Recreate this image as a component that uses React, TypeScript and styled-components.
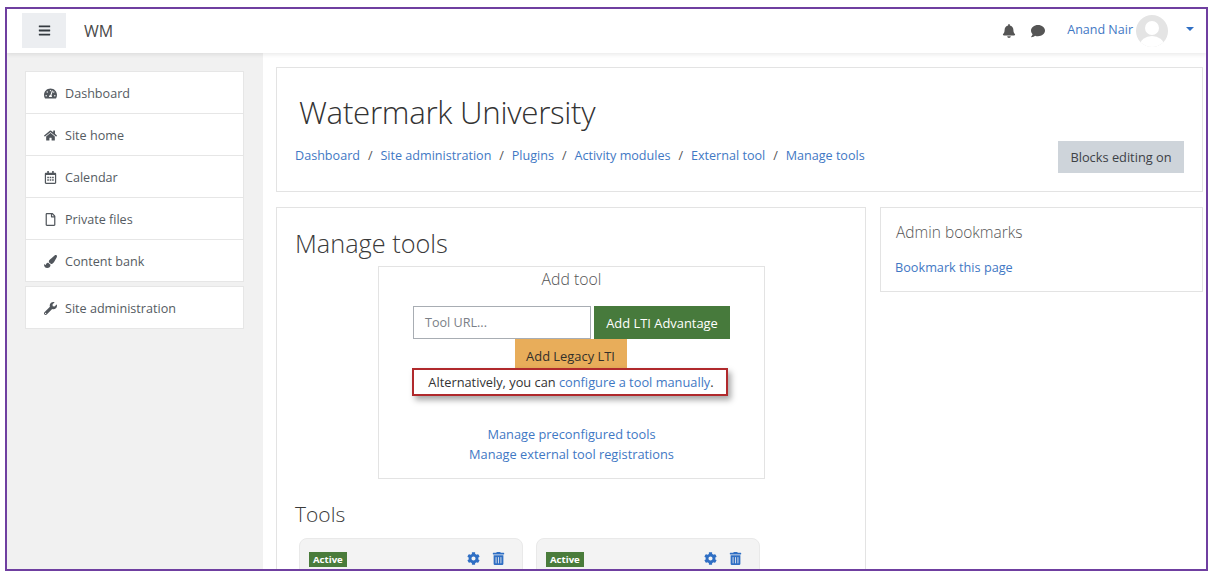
import React from 'react';
import styled, { createGlobalStyle } from 'styled-components';
import {
  FaBars,
  FaBell,
  FaCog,
  FaComment,
  FaHome,
  FaPaintBrush,
  FaRegCalendarAlt,
  FaRegFile,
  FaTachometerAlt,
  FaTrashAlt,
  FaWrench,
} from 'react-icons/fa';

const GlobalStyle = createGlobalStyle`
  html, body {
    margin: 0;
    padding: 0;
    background: #fff;
    font-family: "Open Sans", "Liberation Sans", sans-serif;
    overflow: hidden;
  }
`;

const Frame = styled.div`
  box-sizing: border-box;
  width: 1203px;
  height: 564px;
  margin: 7px 0 0 5px;
  border: 2px solid #6f3fa0;
  display: flex;
  flex-direction: column;
  overflow: hidden;
  background: #fff;
`;

const Navbar = styled.header`
  flex: none;
  box-sizing: border-box;
  height: 44px;
  display: flex;
  align-items: center;
  padding: 0 12px 1px 15px;
  background: #fff;
  box-shadow: 0 2px 4px rgba(0, 0, 0, 0.08);
  position: relative;
`;

const MenuButton = styled.div`
  width: 44px;
  height: 35px;
  display: flex;
  align-items: center;
  justify-content: center;
  background: #eceef1;
  color: #343a40;
  font-size: 13px;
`;

const Brand = styled.span`
  margin-left: 18px;
  font-size: 16px;
  color: #4a4a4a;
`;

const NavRight = styled.div`
  margin-left: auto;
  display: flex;
  align-items: center;
  color: #555;
`;

const NavIcon = styled.span<{ $gap: number }>`
  display: flex;
  font-size: 14px;
  margin-right: ${(p) => p.$gap}px;
`;

const UserName = styled.a`
  font-size: 12.5px;
  color: #3f78c4;
  margin: 0 3px 3px 0;
`;

const Caret = styled.span`
  width: 0;
  height: 0;
  margin: 0 0 4px 18px;
  border-left: 4px solid transparent;
  border-right: 4px solid transparent;
  border-top: 4px solid #2f6fc4;
`;

const Body = styled.div`
  flex: 1;
  display: flex;
  min-height: 0;
`;

const Sidebar = styled.aside`
  flex: none;
  width: 256px;
  box-sizing: border-box;
  padding: 18px 19px 0 18px;
  background: #f1f1f1;
  display: flex;
  flex-direction: column;
  gap: 4px;
`;

const NavCard = styled.nav`
  background: #fff;
  border: 1px solid #e6e6e6;
`;

const NavItem = styled.div`
  box-sizing: border-box;
  height: 41px;
  display: flex;
  align-items: center;
  padding: 2px 0 0 17px;
  font-size: 12.6px;
  color: #555b62;
  & + & {
    height: 42px;
    border-top: 1px solid #e6e6e6;
  }
`;

const NavGlyph = styled.span`
  width: 14px;
  margin-right: 8px;
  display: flex;
  justify-content: center;
  font-size: 13px;
  color: #51565c;
`;

const Content = styled.main`
  flex: 1;
  min-width: 0;
  padding: 14px 3px 0 13px;
  display: flex;
  flex-direction: column;
  gap: 15px;
`;

const HeaderCard = styled.section`
  flex: none;
  box-sizing: border-box;
  height: 125px;
  border: 1px solid #e3e3e3;
  padding: 24px 18px 0 18px;
  position: relative;
`;

const SiteTitle = styled.h1`
  margin: 0 0 0 4px;
  font-size: 31.3px;
  font-weight: 300;
  line-height: 40px;
  color: #333;
  letter-spacing: -0.3px;
`;

const Breadcrumb = styled.div`
  margin-top: 15px;
  display: flex;
  gap: 7.9px;
  font-size: 12.6px;
  color: #555;
`;

const Link = styled.a`
  color: #3f78c4;
`;

const EditButton = styled.div`
  position: absolute;
  right: 18px;
  top: 73px;
  width: 126px;
  height: 32px;
  display: flex;
  align-items: center;
  justify-content: center;
  background: #ced4da;
  color: #3d4146;
  font-size: 12.8px;
`;

const Columns = styled.div`
  flex: 1;
  display: flex;
  gap: 14px;
  min-height: 0;
`;

const MainCard = styled.section`
  flex: none;
  width: 590px;
  box-sizing: border-box;
  border: 1px solid #e3e3e3;
  border-bottom: none;
  padding: 18px 18px 0;
`;

const PageTitle = styled.h2`
  margin: 0;
  font-size: 25.3px;
  font-weight: 300;
  line-height: 34px;
  color: #3a3a3a;
`;

const AddTool = styled.div`
  box-sizing: border-box;
  width: 387px;
  height: 213px;
  margin: 6px 0 0 83px;
  border: 1px solid #e3e3e3;
  display: flex;
  flex-direction: column;
  align-items: center;
`;

const AddToolTitle = styled.div`
  margin-top: 2px;
  font-size: 15.8px;
  font-weight: 300;
  line-height: 20px;
  color: #555;
`;

const UrlRow = styled.div`
  margin-top: 17px;
  display: flex;
  gap: 3px;
`;

const UrlInput = styled.div`
  box-sizing: border-box;
  width: 178px;
  height: 33px;
  display: flex;
  align-items: center;
  padding-left: 11px;
  border: 1px solid #a8adb3;
  font-size: 12.6px;
  color: #7b8087;
`;

const ActionButton = styled.div<{ $bg: string; $fg: string; $w: number; $shift?: number }>`
  width: ${(p) => p.$w}px;
  height: 33px;
  margin-right: ${(p) => p.$shift ?? 0}px;
  display: flex;
  align-items: center;
  justify-content: center;
  background: ${(p) => p.$bg};
  color: ${(p) => p.$fg};
  font-size: 12.9px;
`;

const Highlight = styled.div`
  box-sizing: border-box;
  width: 316px;
  height: 28px;
  margin: -4px 3px 0 0;
  padding-left: 2px;
  display: flex;
  align-items: center;
  justify-content: center;
  border: 2px solid #b0292c;
  box-shadow: 3px 4px 6px rgba(0, 0, 0, 0.35);
  background: #fff;
  position: relative;
  font-size: 12.8px;
  color: #333;
  white-space: pre;
`;

const ExtraLinks = styled.div`
  margin-top: 28px;
  display: flex;
  flex-direction: column;
  align-items: center;
  font-size: 12.8px;
  line-height: 20px;
`;

const ToolsTitle = styled.h3`
  margin: 20px 0 0;
  font-size: 21px;
  font-weight: 300;
  line-height: 30px;
  color: #3a3a3a;
`;

const ToolGrid = styled.div`
  margin: 9px 0 0 4px;
  display: flex;
  gap: 13px;
`;

const ToolCard = styled.div`
  box-sizing: border-box;
  width: 224px;
  height: 60px;
  padding: 13px 17px 0 9px;
  display: flex;
  justify-content: space-between;
  align-items: flex-start;
  background: #f3f3f3;
  border: 1px solid #e9e9e9;
  border-radius: 8px;
`;

const ActiveBadge = styled.span`
  display: flex;
  align-items: center;
  height: 15px;
  padding: 0 4px;
  background: #4a7c3b;
  color: #fff;
  font-size: 9.6px;
  font-weight: 700;
`;

const ToolActions = styled.div`
  display: flex;
  gap: 12px;
  font-size: 13px;
  color: #2f6fc4;
`;

const SideBlock = styled.aside`
  flex: 1;
  align-self: flex-start;
  box-sizing: border-box;
  height: 85px;
  border: 1px solid #e3e3e3;
  padding: 14px;
`;

const BlockTitle = styled.div`
  margin-left: 1px;
  font-size: 15.5px;
  font-weight: 300;
  line-height: 20px;
  color: #555;
`;

const BlockLink = styled(Link)`
  display: block;
  margin-top: 16px;
  font-size: 12.7px;
`;

const Avatar = () => (
  <svg width="32" height="32" viewBox="0 0 32 32">
    <defs>
      <clipPath id="avatar-clip">
        <circle cx="16" cy="16" r="16" />
      </clipPath>
    </defs>
    <g clipPath="url(#avatar-clip)">
      <rect width="32" height="32" fill="#e4e4e4" />
      <circle cx="16" cy="13" r="7" fill="#fff" />
      <ellipse cx="16" cy="30" rx="12" ry="9" fill="#fff" />
    </g>
  </svg>
);

const navTop = [
  { icon: <FaTachometerAlt />, label: 'Dashboard' },
  { icon: <FaHome />, label: 'Site home' },
  { icon: <FaRegCalendarAlt />, label: 'Calendar' },
  { icon: <FaRegFile />, label: 'Private files' },
  { icon: <FaPaintBrush />, label: 'Content bank' },
];

const crumbs = ['Dashboard', 'Site administration', 'Plugins', 'Activity modules', 'External tool', 'Manage tools'];

const App: React.FC = () => {
  return (
    <>
      <GlobalStyle />
      <Frame>
        <Navbar>
          <MenuButton>
            <FaBars />
          </MenuButton>
          <Brand>WM</Brand>
          <NavRight>
            <NavIcon $gap={15}>
              <FaBell />
            </NavIcon>
            <NavIcon $gap={22}>
              <FaComment />
            </NavIcon>
            <UserName>Anand Nair</UserName>
            <Avatar />
            <Caret />
          </NavRight>
        </Navbar>
        <Body>
          <Sidebar>
            <NavCard>
              {navTop.map((item) => (
                <NavItem key={item.label}>
                  <NavGlyph>{item.icon}</NavGlyph>
                  {item.label}
                </NavItem>
              ))}
            </NavCard>
            <NavCard>
              <NavItem>
                <NavGlyph>
                  <FaWrench />
                </NavGlyph>
                Site administration
              </NavItem>
            </NavCard>
          </Sidebar>
          <Content>
            <HeaderCard>
              <SiteTitle>Watermark University</SiteTitle>
              <Breadcrumb>
                {crumbs.map((c, i) => (
                  <React.Fragment key={c}>
                    {i > 0 && <span>/</span>}
                    <Link>{c}</Link>
                  </React.Fragment>
                ))}
              </Breadcrumb>
              <EditButton>Blocks editing on</EditButton>
            </HeaderCard>
            <Columns>
              <MainCard>
                <PageTitle>Manage tools</PageTitle>
                <AddTool>
                  <AddToolTitle>Add tool</AddToolTitle>
                  <UrlRow>
                    <UrlInput>Tool URL...</UrlInput>
                    <ActionButton $bg="#477a3c" $fg="#fff" $w={136}>
                      Add LTI Advantage
                    </ActionButton>
                  </UrlRow>
                  <ActionButton $bg="#e8ad5a" $fg="#33302a" $w={112} $shift={2}>
                    Add Legacy LTI
                  </ActionButton>
                  <Highlight>
                    Alternatively, you can <Link>configure a tool manually</Link>.
                  </Highlight>
                  <ExtraLinks>
                    <Link>Manage preconfigured tools</Link>
                    <Link>Manage external tool registrations</Link>
                  </ExtraLinks>
                </AddTool>
                <ToolsTitle>Tools</ToolsTitle>
                <ToolGrid>
                  {[0, 1].map((n) => (
                    <ToolCard key={n}>
                      <ActiveBadge>Active</ActiveBadge>
                      <ToolActions>
                        <FaCog />
                        <FaTrashAlt />
                      </ToolActions>
                    </ToolCard>
                  ))}
                </ToolGrid>
              </MainCard>
              <SideBlock>
                <BlockTitle>Admin bookmarks</BlockTitle>
                <BlockLink>Bookmark this page</BlockLink>
              </SideBlock>
            </Columns>
          </Content>
        </Body>
      </Frame>
    </>
  );
};

export default App;
